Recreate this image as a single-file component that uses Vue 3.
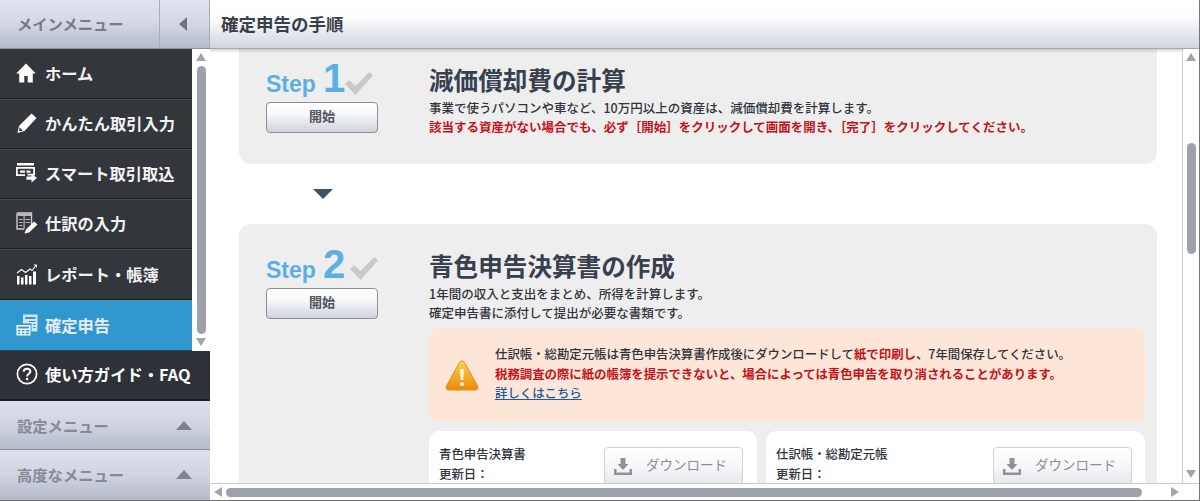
<script setup>
const navItems = [
  { key: 'home', label: 'ホーム' },
  { key: 'pen', label: 'かんたん取引入力' },
  { key: 'smart', label: 'スマート取引取込' },
  { key: 'journal', label: '仕訳の入力' },
  { key: 'chart', label: 'レポート・帳簿' },
  { key: 'tax', label: '確定申告', active: true }
]
</script>

<template>
  <div class="app">
    <aside class="side">
      <div class="menu-head">
        <span class="menu-title">メインメニュー</span>
        <span class="collapse"><i class="tri-left"></i></span>
      </div>
      <div class="nav-wrap">
        <nav class="nav">
          <a v-for="item in navItems" :key="item.key" class="nav-item" :class="{ active: item.active }">
            <span class="nav-icon">
              <svg v-if="item.key === 'home'" width="20" height="20" viewBox="0 0 20 20">
                <path fill="#fff" d="M10 .5 L19.800 10.500 L16.800 10.500 L16.800 19.500 L11.700 19.500 L11.700 13 L8.300 13 L8.300 19.500 L3.200 19.500 L3.200 10.500 L.2 10.500 Z" />
              </svg>
              <svg v-else-if="item.key === 'pen'" width="22" height="22" viewBox="0 0 22 22">
                <path fill="#fff" d="M15.500 1.500 L20.500 6 L8.500 19 L1.500 21 L3 14 Z" />
                <path fill="#33373c" d="M3.600 15.600 L6.600 18.300 L5.900 18.900 L3.100 18.900 Z" />
              </svg>
              <svg v-else-if="item.key === 'smart'" width="22" height="20" viewBox="0 0 22 20">
                <path fill="#fff" d="M1 0 h17 v2.500 h-17 Z M0 4 h19 v8.500 h-7.500 v-1.800 h5.700 v-5 h-15.400 v5.500 h7.200 v1.800 h-9 Z" />
                <path fill="#fff" d="M4 7.500 h5 v2.200 h-5 Z M10.500 7.500 h4 v2.200 h-4 Z" />
                <path fill="#fff" d="M10.500 13.500 h5 v-2.800 L21 15 L15.500 19.500 v-2.800 h-5 Z" />
              </svg>
              <svg v-else-if="item.key === 'journal'" width="22" height="22" viewBox="0 0 22 22">
                <path fill="none" stroke="#c9cbcd" stroke-width="1.400" d="M1 1 h14.500 v12 M1 1 v16 h7" />
                <path fill="#b5b7ba" d="M2 1 h13 v3 h-13 Z M7.500 4 h1.200 v13 h-1.200 Z M3 7 h3.500 v1 h-3.500 Z M3 10 h3.500 v1 h-3.500 Z M3 13 h3.500 v1 h-3.500 Z M9.500 7 h4.500 v1 h-4.500 Z M9.500 10 h4.500 v1 h-4.500 Z" />
                <path fill="#fff" d="M18 9.500 L21.500 12.500 L13 20.500 L8.500 21.500 L10 17.500 Z" />
              </svg>
              <svg v-else-if="item.key === 'chart'" width="22" height="22" viewBox="0 0 22 22">
                <path fill="#fff" d="M1 13 h2.500 v8.500 h-2.500 Z M5 14.500 h2.500 v7 h-2.500 Z M9 12 h2.500 v9.500 h-2.500 Z M13 13 h2.500 v8.500 h-2.500 Z M17 8.500 h3 v13 h-3 Z" />
                <path fill="none" stroke="#fff" stroke-width="1.100" d="M1 10 L5.500 6.500 L9.500 9.500 L14 6 L16 7.500 L20 2.500" />
                <path fill="#fff" d="M17.500 1.500 h3.500 v3.500 Z" />
              </svg>
              <svg v-else width="22" height="22" viewBox="0 0 22 22">
                <path fill="#cfe6f4" d="M7 .5 h14.500 v17 h-6 v-8 h-8.500 Z" />
                <path fill="#3097cf" d="M9 3 h10.500 v2 h-10.500 Z M13 7 h6.500 v1 h-6.500 Z M17 10 h2.500 v1 h-2.500 Z M17 13 h2.500 v1 h-2.500 Z" />
                <path fill="#fff" d="M.5 11 h14 v10.500 h-14 Z" />
                <path fill="#3097cf" d="M2 12.500 h11 v2 h-11 Z M2 16 h2.500 v1.500 h-2.500 Z M6 16 h2.500 v1.500 h-2.500 Z M10 16 h3 v1.500 h-3 Z M2 18.700 h2.500 v1.500 h-2.500 Z M6 18.700 h2.500 v1.500 h-2.500 Z M10 18.700 h3 v1.500 h-3 Z" />
              </svg>
            </span>
            <span class="nav-label">{{ item.label }}</span>
          </a>
        </nav>
        <div class="vbar nav-bar">
          <i class="tri-up"></i>
          <span class="vthumb nav-thumb"></span>
          <i class="tri-down"></i>
        </div>
      </div>
      <a class="guide">
        <svg class="nav-icon-guide" width="22" height="22" viewBox="0 0 22 22">
          <circle cx="11" cy="11" r="9.600" fill="none" stroke="#fff" stroke-width="1.700" />
          <path fill="none" stroke="#fff" stroke-width="2" d="M7.600 8.700 C7.800 6.600 9.300 5.800 11 5.800 C13 5.800 14.400 7 14.400 8.600 C14.400 10.800 11.100 10.800 11.100 13.400" />
          <circle cx="11.100" cy="16" r="1.300" fill="#fff" />
        </svg>
        <span>使い方ガイド・FAQ</span>
      </a>
      <div class="sub-menu first"><span>設定メニュー</span><i class="tri-menu"></i></div>
      <div class="sub-menu last"><span>高度なメニュー</span><i class="tri-menu"></i></div>
    </aside>

    <main class="main">
      <header class="page-head">確定申告の手順</header>
      <div class="body">
        <div class="scroll">
          <div class="content">
            <section class="step-card">
              <div class="step-col">
                <div class="step-mark">
                  <span class="step-word">Step</span><span class="step-num">1</span>
                  <svg class="check" width="28" height="23" viewBox="0 0 28 23">
                    <path fill="#c9c9c9" d="M0 12 L4 8 L10.500 14 L24.500 0 L28 3.500 L10.500 23 Z" />
                  </svg>
                </div>
                <button class="start">開始</button>
              </div>
              <div class="step-main">
                <h2>減価償却費の計算</h2>
                <p>事業で使うパソコンや車など、10万円以上の資産は、減価償却費を計算します。</p>
                <p class="red">該当する資産がない場合でも、必ず［開始］をクリックして画面を開き、［完了］をクリックしてください。</p>
              </div>
            </section>

            <div class="arrow"></div>

            <section class="step-card">
              <div class="step-col">
                <div class="step-mark second">
                  <span class="step-word">Step</span><span class="step-num">2</span>
                  <svg class="check" width="28" height="23" viewBox="0 0 28 23">
                    <path fill="#c9c9c9" d="M0 12 L4 8 L10.500 14 L24.500 0 L28 3.500 L10.500 23 Z" />
                  </svg>
                </div>
                <button class="start">開始</button>
              </div>
              <div class="step-main">
                <h2>青色申告決算書の作成</h2>
                <p>1年間の収入と支出をまとめ、所得を計算します。</p>
                <p>確定申告書に添付して提出が必要な書類です。</p>
                <div class="notice">
                  <svg class="warn" width="34" height="31" viewBox="0 0 34 31">
                    <defs>
                      <linearGradient id="warnFill" x1="0" y1="0" x2="0" y2="1">
                        <stop offset="0" stop-color="#fbd24a" />
                        <stop offset="1" stop-color="#ee8a0c" />
                      </linearGradient>
                    </defs>
                    <path fill="url(#warnFill)" stroke="#e28a14" stroke-width="1" stroke-linejoin="round" d="M17 1 C18.200 1 19 1.800 19.800 3.200 L32.400 25.800 C33.600 28 32.600 30 30 30 L4 30 C1.400 30 .4 28 1.600 25.800 L14.200 3.200 C15 1.800 15.800 1 17 1 Z" />
                    <path fill="#fff6dc" d="M15 9 h4 l-.8 11 h-2.400 Z" />
                    <circle cx="17" cy="24" r="2.100" fill="#fff6dc" />
                  </svg>
                  <div class="notice-text">
                    <p>仕訳帳・総勘定元帳は青色申告決算書作成後にダウンロードして<em>紙で印刷し</em>、7年間保存してください。</p>
                    <p class="red">税務調査の際に紙の帳簿を提示できないと、場合によっては青色申告を取り消されることがあります。</p>
                    <p><a class="link">詳しくはこちら</a></p>
                  </div>
                </div>
                <div class="docs">
                  <div class="doc doc-a">
                    <div class="doc-text"><p>青色申告決算書</p><p>更新日：</p></div>
                    <button class="dl">
                      <svg width="18" height="18" viewBox="0 0 18 18"><path fill="#8e929a" d="M6.500 1 h5 v6 h3 L9 13 L3.500 7 h3 Z M0 12 h2.500 v3.500 h13 v-3.500 h2.500 v6 h-18 Z" /></svg>
                      <span>ダウンロード</span>
                    </button>
                  </div>
                  <div class="doc doc-b">
                    <div class="doc-text"><p>仕訳帳・総勘定元帳</p><p>更新日：</p></div>
                    <button class="dl">
                      <svg width="18" height="18" viewBox="0 0 18 18"><path fill="#8e929a" d="M6.500 1 h5 v6 h3 L9 13 L3.500 7 h3 Z M0 12 h2.500 v3.500 h13 v-3.500 h2.500 v6 h-18 Z" /></svg>
                      <span>ダウンロード</span>
                    </button>
                  </div>
                </div>
              </div>
            </section>
          </div>
        </div>
        <div class="vbar main-bar">
          <i class="tri-up"></i>
          <span class="vthumb main-thumb"></span>
          <i class="tri-down"></i>
        </div>
      </div>
      <div class="hbar">
        <i class="tri-hleft"></i>
        <span class="hthumb"></span>
        <i class="tri-hright"></i>
      </div>
    </main>
  </div>
</template>

<style scoped>
.app {
  display: grid;
  grid-template-columns: 210px 990px;
  height: 501px;
  width: 1200px;
  overflow: hidden;
  font-family: "Noto Sans CJK JP", "Liberation Sans", sans-serif;
  color: #3a3f4a;
  background: #fff;
}
p, h2 { margin: 0; }

/* sidebar */
.side { display: flex; flex-direction: column; height: 501px; box-sizing: border-box; border-bottom: 1px solid #6f6f6f; }
.menu-head {
  height: 49px;
  display: flex;
  background: linear-gradient(#e0e3ed, #d6d9e5 45%, #b6bbca);
  border-bottom: 1px solid #8d919c;
  box-sizing: border-box;
}
.menu-title {
  width: 160px;
  box-sizing: border-box;
  padding-left: 17px;
  line-height: 47px;
  font-size: 15.300px;
  font-weight: 700;
  color: #767b89;
  border-right: 1px solid #a9adb9;
}
.collapse { flex: 1; display: flex; align-items: center; padding-left: 19px; border-right: 1px solid #a9adb9; }
.tri-left { border: solid transparent; border-width: 7.500px 8px 7.500px 0; border-right-color: #6e7484; }

.nav-wrap { height: 302px; display: flex; background: #fff; }
.nav { width: 192px; background: #2f3338; }
.nav-item {
  display: flex;
  align-items: center;
  height: 50px;
  box-sizing: border-box;
  padding: 0 0 2px 16px;
  border-top: 1px solid #43474c;
  border-bottom: 1px solid #1d2024;
  background: #33363b;
  color: #f2f2f2;
  font-size: 16.250px;
  font-weight: 700;
}
.nav-item:first-child { border-top: 0; }
.nav-item:nth-child(5) { height: 51px; }
.nav-item.active { background: #3097cf; border-top-color: #4f93b5; border-bottom-color: #1d4f6c; height: 51px; color: #e6eef3; }
.nav-icon { width: 29px; display: flex; align-items: center; }
.nav-label { white-space: nowrap; }

.guide {
  height: 50px;
  box-sizing: border-box;
  display: flex;
  align-items: center;
  gap: 7px;
  padding: 0 0 3px 16px;
  background: #2e3137;
  border-bottom: 2px solid #1a1c20;
  color: #fff;
  font-size: 16.300px;
  font-weight: 700;
  white-space: nowrap;
}
.nav-icon-guide { flex: none; }
.sub-menu {
  height: 49px;
  box-sizing: border-box;
  display: flex;
  align-items: center;
  justify-content: space-between;
  padding: 0 18px 0 17px;
  background: linear-gradient(#dcdfe9, #d3d6e2 45%, #b5bac9);
  border-bottom: 1px solid #8d919c;
  font-size: 15.300px;
  font-weight: 700;
  color: #858a99;
}
.sub-menu.last { height: 50px; border-bottom: 0; padding-bottom: 2px; }
.sub-menu span { white-space: nowrap; }
.tri-menu { border: solid transparent; border-width: 0 8px 9px; border-bottom-color: #7c8291; }

/* main */
.main { display: flex; flex-direction: column; height: 501px; min-width: 0; border-bottom: 1px solid #6f6f6f; box-sizing: border-box; border-right: 1px solid #777; }
.page-head {
  height: 49px;
  flex: none;
  box-sizing: border-box;
  padding-left: 11px;
  line-height: 48px;
  font-size: 17.500px;
  font-weight: 700;
  color: #3a3f4a;
  background: linear-gradient(#fff, #fdfdfe 35%, #d2d5e1);
  border-bottom: 1px solid #a5a7af;
  white-space: nowrap;
}
.body { flex: 1; min-height: 0; display: flex; }
.scroll { flex: 1; min-width: 0; overflow: hidden; position: relative; }
.scroll::before {
  content: "";
  position: absolute;
  left: 0; right: 0; top: 0;
  height: 4px;
  z-index: 1;
  background: linear-gradient(rgba(90, 90, 100, .26), rgba(90, 90, 100, 0));
}
.content { margin-top: -11px; padding: 0 25px 0 29px; }

.step-card {
  display: flex;
  background: #eeeeee;
  border-radius: 12px;
  padding: 0 12px 0 27px;
}
.step-col { width: 163px; flex: none; }
.step-mark {
  display: flex;
  align-items: baseline;
  height: 64px;
  padding-top: 20px;
  box-sizing: border-box;
  color: #5cafe3;
  font-family: "Liberation Sans", sans-serif;
  font-weight: 700;
}
.step-word { font-size: 23px; line-height: 40px; width: 57px; white-space: nowrap; }
.step-num { font-size: 40px; line-height: 40px; width: 22px; }
.check { align-self: flex-start; margin-top: 14px; }
.second .check { margin-left: 5px; margin-top: 13px; }
.start {
  display: block;
  width: 112px;
  height: 31px;
  padding: 0 0 4px;
  border: 1px solid #8b8f98;
  border-radius: 4px;
  background: linear-gradient(#fff, #f6f7fa 40%, #cfd2dc);
  font: 700 13px "Noto Sans CJK JP", sans-serif;
  color: #50555f;
}
.step-main { flex: 1; min-width: 0; padding: 24px 0 28px; }
.step-main h2 { font-size: 24.600px; line-height: 34px; font-weight: 700; color: #38404e; margin-bottom: 3px; white-space: nowrap; }
.step-main p { font-size: 12.500px; line-height: 18.500px; font-weight: 500; color: #30343b; white-space: nowrap; }
.step-main .red { color: #c5121a; font-weight: 700; }
.arrow {
  width: 0;
  margin: 25px 0 25px 74px;
  border: solid transparent;
  border-width: 10px 10px 0;
  border-top-color: #3f5068;
}
.notice {
  display: flex;
  align-items: center;
  margin-top: 6px;
  height: 93px;
  border-radius: 10px;
  background: #fde6d8;
  padding: 0 0 0 16px;
  box-sizing: border-box;
}
.warn { flex: none; margin: 2px 16px 0 0; }
.step-main .notice-text p { line-height: 19.500px; font-size: 12.400px; }
.notice-text em { font-style: normal; color: #c5121a; font-weight: 700; }
.link { color: #1a5c9a; text-decoration: underline; font-weight: 500; }

.docs { display: flex; gap: 9px; margin-top: 10px; }
.doc {
  display: flex;
  justify-content: space-between;
  height: 80px;
  box-sizing: border-box;
  background: #fff;
  border-radius: 10px;
  padding: 13px 0 0 10px;
}
.doc-a { width: 328px; padding-right: 14px; }
.doc-b { width: 379px; padding-right: 13px; }
.step-main .doc-text p { font-size: 12.400px; line-height: 20px; font-weight: 500; }
.dl {
  width: 139px;
  height: 38px;
  margin-top: 3px;
  padding: 0 0 4px 9px;
  display: flex;
  align-items: center;
  gap: 14px;
  border: 1px solid #cfd1d6;
  border-radius: 4px;
  background: linear-gradient(#fff, #f7f7f9 50%, #e6e7ec);
  font: 400 13.500px "Noto Sans CJK JP", sans-serif;
  color: #8a8e97;
  box-sizing: border-box;
  white-space: nowrap;
}
.dl svg { flex: none; margin-top: 3px; }

/* scrollbars */
.vbar {
  width: 18px;
  flex: none;
  box-sizing: border-box;
  display: flex;
  flex-direction: column;
  align-items: center;
  background: #fff;
}
.main-bar { width: 17px; border-left: 1px solid #c9c9cf; }
.tri-up { flex: none; margin-top: 4px; border: solid transparent; border-width: 0 5px 8px; border-bottom-color: #a0a4ad; }
.tri-down { flex: none; margin-top: auto; margin-bottom: 5px; border: solid transparent; border-width: 8px 5px 0; border-top-color: #a0a4ad; }
.vthumb { display: block; width: 9px; border-radius: 5px; background: #9da1ac; }
.nav-thumb { height: 268px; margin-top: 5px; }
.main-thumb { height: 111px; margin-top: 82px; }
.hbar {
  height: 17px;
  flex: none;
  box-sizing: border-box;
  display: flex;
  align-items: center;
  padding: 0 20px 0 4px;
  border-top: 1px solid #c9c9cf;
  background: #fff;
}
.tri-hleft { flex: none; border: solid transparent; border-width: 5px 8px 5px 0; border-right-color: #a0a4ad; }
.hthumb { display: block; flex: none; width: 916px; height: 9px; margin-left: 4px; border-radius: 5px; background: #9da1ac; }
.tri-hright { flex: none; margin-left: 29px; border: solid transparent; border-width: 5px 0 5px 8px; border-left-color: #a0a4ad; }
</style>
